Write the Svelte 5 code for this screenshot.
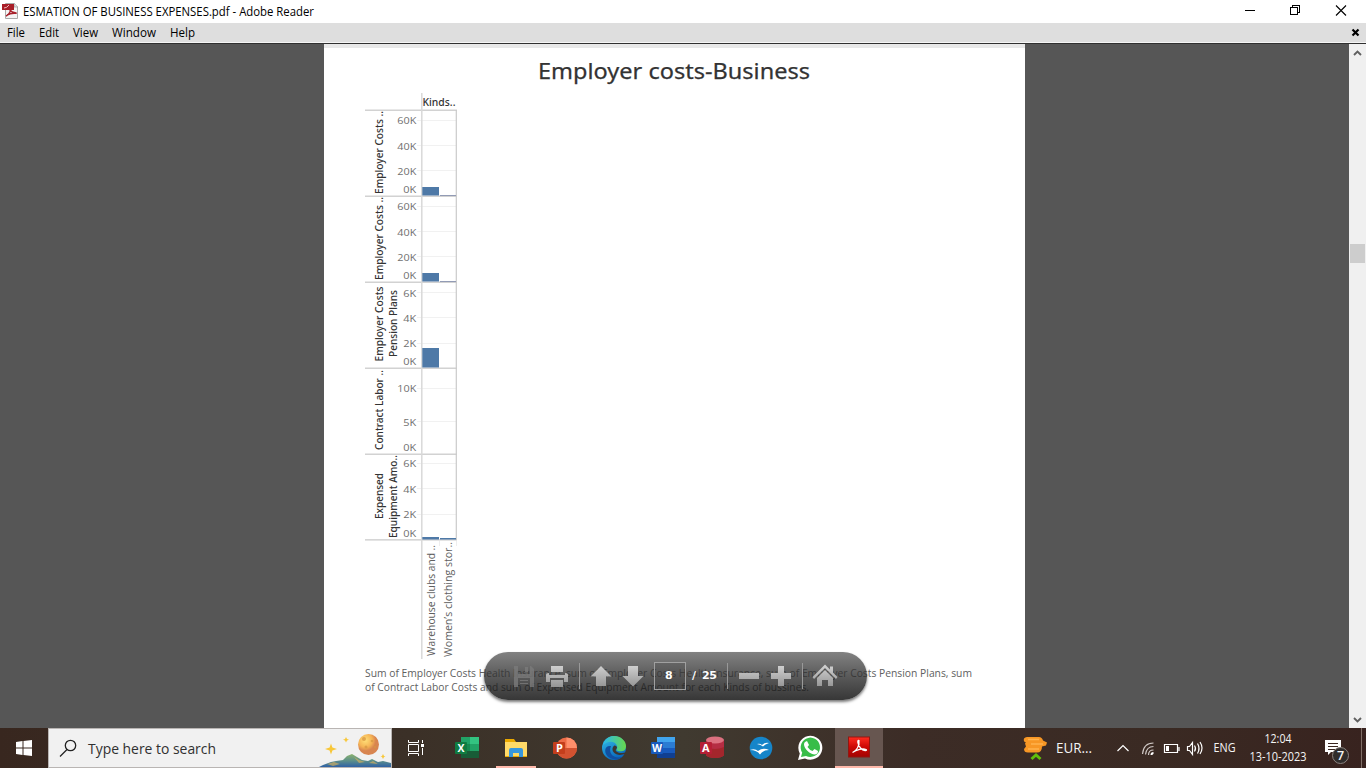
<script>
  const panels = [
    { top: 110, lines: ['Employer Costs ..'], spans: [[111, 194]], ticks: [['60K', 120], ['40K', 145.5], ['20K', 170.5], ['0K', 189]], bars: [[187, 8.5], [195, 1]] },
    { top: 196, lines: ['Employer Costs ..'], spans: [[197, 280]], ticks: [['60K', 206], ['40K', 231.5], ['20K', 256.5], ['0K', 275]], bars: [[273, 8.5], [281, 1]] },
    { top: 282, lines: ['Employer Costs', 'Pension Plans'], spans: [[286.5, 361.5], [290, 357]], ticks: [['6K', 292.5], ['4K', 317.5], ['2K', 343], ['0K', 361]], bars: [[348, 19.5]] },
    { top: 368, lines: ['Contract Labor ..'], spans: [[370, 450]], ticks: [['10K', 388], ['5K', 421.5], ['0K', 447]], bars: [] },
    { top: 454, lines: ['Expensed', 'Equipment Amo..'], spans: [[473, 519], [455, 538]], ticks: [['6K', 463], ['4K', 488.5], ['2K', 514], ['0K', 533]], bars: [[537, 2.5], [538, 1.5]] }
  ];
  const menus = [['File', 7, 18], ['Edit', 39, 20], ['View', 73, 25], ['Window', 112, 44], ['Help', 170, 25]];
</script>

<div class="screen">
  <header class="titlebar">
    <svg width="330" height="23" viewBox="0 0 330 23">
      <path d="M5.5 3.5h9l3 3v12h-12z" fill="#f4f4f4" stroke="#aaa" />
      <path d="M14 3v4h4" fill="#ddd" stroke="#999" stroke-width=".7" />
      <path d="M2 4h12v6H2z" fill="#a81e28" />
      <path d="M6 16c4-2 5-6 4-9-2 0-1 5 6 6 1 1-4-1-9 2" fill="none" stroke="#a8222c" stroke-width="1.5" />
      <path d="M4 8q3 0 5-3" fill="none" stroke="#edb8bc" />
      <text x="23" y="16" font-size="12" textLength="291" lengthAdjust="spacingAndGlyphs">ESMATION OF BUSINESS EXPENSES.pdf - Adobe Reader</text>
    </svg>
    <svg width="136" height="23" viewBox="1230 0 136 23" fill="none" stroke="#000" shape-rendering="crispEdges">
      <path d="M1245 10.5h10M1290.500 7.500h7v7h-7zM1292.500 7v-2h7v7h-2" />
      <path d="M1336 5.500l10 10M1346 5.500l-10 10" shape-rendering="auto" stroke-width="1.1" />
    </svg>
  </header>

  <nav class="menubar">
    <svg width="220" height="19" viewBox="0 23 220 19">
      {#each menus as [name, x, w]}
        <text {x} y="37" font-size="12" textLength={w} lengthAdjust="spacingAndGlyphs">{name}</text>
      {/each}
    </svg>
    <svg width="20" height="19" viewBox="1346 23 20 19"><path d="M1352.500 29.500l6 6M1358.500 29.500l-6 6" stroke="#000" stroke-width="2.200" /></svg>
  </nav>

  <main class="document">
    <section class="page">
      <svg width="701" height="684" viewBox="324 44 701 684">
        <rect x="324" y="44" width="701" height="4" fill="#e8e8e8" />
        <text x="538" y="79" class="heading" textLength="272" lengthAdjust="spacingAndGlyphs">Employer costs-Business</text>
        <text x="422.500" y="106" class="axis-name" textLength="33" lengthAdjust="spacingAndGlyphs">Kinds..</text>
        {#each panels as p}
          <path d="M365 {p.top + .3}H457" stroke="#d2d2d2" stroke-width="1.500" />
          {#each p.ticks as [label, y]}
            {#if label !== '0K'}<path d="M417 {Math.floor(y) + .5}H456" stroke="#f1f1f1" />{/if}
            <text x={label.length === 2 ? 403.3 : 397.3} y={y + 4} class="tick" textLength={label.length === 2 ? 13 : 19} lengthAdjust="spacingAndGlyphs">{label}</text>
          {/each}
          {#each p.lines as line, i}
            <text transform="translate({382.800 + i * 14} {p.spans[i][1]}) rotate(-90)" class="axis-name" textLength={p.spans[i][1] - p.spans[i][0]} lengthAdjust="spacingAndGlyphs">{line}</text>
          {/each}
        {/each}
        <path d="M365 539.800H457" stroke="#c9c9c9" stroke-width="1.300" />
        <path d="M421.800 93V659" stroke="#d9d9d9" stroke-width="1.500" />
        <path d="M456.300 110V540" stroke="#cacaca" stroke-width="1.200" />
        <path d="M439.500 541V546M456.500 541V546" stroke="#eee" />
        {#each panels as p}
          {#each p.bars as [y, h], i}
            <rect x={422.300 + i * 17.700} {y} width={i ? 16 : 16.700} height={h} fill={i && h === 1 ? '#929bb5' : '#4e79a7'} />
          {/each}
        {/each}
        <text transform="translate(435 656) rotate(-90)" class="category" textLength="111" lengthAdjust="spacingAndGlyphs">Warehouse clubs and ..</text>
        <text transform="translate(452 657) rotate(-90)" class="category" textLength="115" lengthAdjust="spacingAndGlyphs">Women’s clothing stor..</text>
        <text x="365" y="676.800" class="caption" textLength="607" lengthAdjust="spacingAndGlyphs">Sum of Employer Costs Health Insurance, sum of Employer Costs Health Insurance, sum of Employer Costs Pension Plans, sum</text>
        <text x="365" y="691.300" class="caption" textLength="444" lengthAdjust="spacingAndGlyphs">of Contract Labor Costs and sum of Expensed Equipment Amount for each Kinds of bussines.</text>
      </svg>
      <div class="reader-tools">
        <svg width="383" height="48" viewBox="484 652 383 48">
          <defs>
            <linearGradient id="metal" x1="0" y1="664" x2="0" y2="688" gradientUnits="userSpaceOnUse"><stop stop-color="#d4d4d4" /><stop offset="1" stop-color="#929292" /></linearGradient>
          </defs>
          <g fill="#7b7b7b" opacity=".8"><path d="M514 666h17l3 3v18h-20zm4 0v8h12v-8zm0 12v9h12v-9z" fill-rule="evenodd" /><path d="M525 667h3v5h-3zM520 680h8v1h-8zM520 683h8v1h-8z" /></g>
          <g fill="url(#metal)">
            <path d="M551 666h12v6h-12zM546 675q0-2 3-2v2h16v-2q3 0 3 2v7h-4v-4h-14v4h-4zM551 680h12v7h-12z" />
            <path d="M601 666l10.500 10.500h-5.500v9.500h-10v-9.500h-5.500zM628 666h10v10h5.500L633 686.500 622.500 676h5.500z" />
            <path d="M739 673h20v6h-20zM778 666h6v7h7v6h-7v7h-6v-7h-7v-6h7z" />
            <path d="M812.500 677L825 664.500l5 5v-3h3v6l4.500 4.500-1.500 2-11-11-11 11zM817 678l8-8 8 8v8h-5v-6h-6v6h-5z" />
          </g>
          <path d="M579.500 663v26M727.500 663v26M802.500 663v26" stroke="#999" />
          <rect x="654.500" y="662.500" width="31" height="27" fill="#444" fill-opacity=".25" stroke="#a0a0a0" />
          <g class="page-number"><text x="665" y="679">8</text><text x="692" y="679">/</text><text x="702" y="679" textLength="15">25</text></g>
        </svg>
      </div>
    </section>
    <aside class="scroll">
      <svg width="17" height="684" viewBox="1349 44 17 684">
        <rect x="1350" y="244" width="15" height="19" fill="#cdcdcd" />
        <path d="M1354 55l3.500-3.500 3.500 3.500M1354 718l3.500 3.500 3.500-3.500" fill="none" stroke="#606060" stroke-width="1.900" />
      </svg>
    </aside>
  </main>

  <footer class="taskbar">
    <div class="start"><svg width="48" height="40" viewBox="0 728 48 40"><path d="M16 742l6.500-1v6.500H16zM23.500 741l8.500-1v7.500h-8.500zM16 748.500h6.500v6.500l-6.500-1zM23.500 748.500h8.500v7.500l-8.500-1z" fill="white" /></svg></div>
    <div class="search">
      <svg width="342" height="38" viewBox="49 729 342 38">
        <defs>
          <radialGradient id="moon" cx=".35" cy=".3"><stop stop-color="#ffdf78" /><stop offset=".65" stop-color="#f5b456" /><stop offset="1" stop-color="#d88550" /></radialGradient>
          <linearGradient id="hill" x2="0" y2="1"><stop stop-color="#8bb36e" /><stop offset=".45" stop-color="#5f9288" /><stop offset="1" stop-color="#285aa9" /></linearGradient>
        </defs>
        <g fill="none" stroke="#222" stroke-width="1.300"><circle cx="70.500" cy="745.500" r="5.200" /><path d="M67 749.500l-7 7" /></g>
        <text x="88" y="754" font-size="15" fill="#303030" textLength="128" lengthAdjust="spacingAndGlyphs">Type here to search</text>
        <circle cx="368.500" cy="744.500" r="10.500" fill="url(#moon)" />
        <g fill="#d79743" opacity=".75"><circle cx="364" cy="739" r="2" /><circle cx="372" cy="741" r="1.300" /><circle cx="366" cy="747" r="1.500" /><circle cx="375" cy="747" r="1.200" /></g>
        <path d="M317 768l6-3 8-3 5-1 7-1 4-4 5-2 5 3 5 3 6 1 4-2 6 3 5-1 8 2v5z" fill="url(#hill)" />
        <path d="M327 764l7-2 6 2-7 2zM354 757l5 3 6 2-6 1zM369 763l4-2 5 3z" fill="#d7b25d" opacity=".65" />
        <path d="M331 743.500l1.400 4 4.600 1.500-4.600 1.500-1.400 4-1.400-4-4.600-1.500 4.600-1.500zM346 737l1 2 2 .7-2 .7-1 2-1-2-2-.7 2-.7zM383 754l1 2 1.500.500-1.500.500-1 2-1-2-1.500-.500 1.500-.500z" fill="#f8c739" />
      </svg>
    </div>
    <div class="apps">
      <svg width="491" height="40" viewBox="392 728 491 40">
        <defs>
          <linearGradient id="edge-blue" x2=".5" y2="1"><stop stop-color="#36c2e9" /><stop offset="1" stop-color="#0867bd" /></linearGradient>
          <linearGradient id="edge-green"><stop stop-color="#29b9ed" /><stop offset="1" stop-color="#67d84c" /></linearGradient>
          <linearGradient id="reader" x2="0" y2="1"><stop stop-color="#ff2c20" /><stop offset=".5" stop-color="#cc0804" /><stop offset="1" stop-color="#a20302" /></linearGradient>
        </defs>
        <rect x="835" y="728" width="48" height="40" fill="#675650" />
        <path d="M496 766h40v2h-40zM835 766h48v2h-48z" fill="#ffb9ab" />
        <g fill="none" stroke="#fff"><path d="M408.500 740v2.500h10V740M408.500 744.500h10v7h-10zM408.500 756v-2.500h10v2.500M422.500 740v3M422.500 748v7" /><path d="M421 744h3v3h-3z" fill="#fff" stroke="none" /></g>

        <g><path d="M461 737h18v21h-18z" fill="#168b50" /><path d="M461 737h9v7h-9z" fill="#21a366" /><path d="M470 737h9v7h-9z" fill="#33c481" /><path d="M470 744h9v7h-9z" fill="#21a366" /><path d="M461 751h18v7h-18z" fill="#185c37" /><rect x="455" y="742" width="12" height="12" rx="1" fill="#107c41" /><text x="457.500" y="752" class="letter" textLength="7" lengthAdjust="spacingAndGlyphs">X</text></g>
        <g><path d="M505 739h9l2 3h11v15h-22z" fill="#eba900" /><path d="M505 742h22v14h-22z" fill="#ffda68" /><path d="M509 757v-7q0-2 2-2h10q2 0 2 2v7h-4v-4h-6v4z" fill="#3797dd" /></g>
        <g><circle cx="566.500" cy="748" r="10.500" fill="#ed6c47" /><path d="M566.500 737.500a10.500 10.500 0 0 1 10.500 10.500h-10.500z" fill="#ff8f6b" /><path d="M556 748h21a10.500 10.500 0 0 1-21 0" fill="#d35230" /><rect x="553" y="742" width="12" height="12" rx="1" fill="#c43e1c" /><text x="556" y="752" class="letter">P</text></g>
        <g><circle cx="614" cy="748" r="12" fill="url(#edge-blue)" /><path d="M603 745C605 738 610 736 614 736c7 0 12 5 12 10 0 5-4 6-8 5-3-1 0-2-1-5-2-6-10-5-14-1" fill="url(#edge-green)" /><path d="M611 746c-3 7 2 13 11 11-3 3-8 3-12 1-7-4-6-13 1-12" fill="#114fa0" /><path d="M613 747c-2 4 2 8 7 8l5-1 1-2c-3 2-9 1-10-1-1-1 1-2 1-4-2-2-3-2-4 0" fill="#3c3730" /></g>
        <g><path d="M657 737h18v5h-18z" fill="#41a5ee" /><path d="M657 742h18v6h-18z" fill="#2b7cd3" /><path d="M657 748h18v5h-18z" fill="#185abd" /><path d="M657 753h18v5h-18z" fill="#103f91" /><rect x="651" y="742" width="12" height="12" rx="1" fill="#185abd" /><text x="652" y="752" class="letter" textLength="10" lengthAdjust="spacingAndGlyphs">W</text></g>
        <g><path d="M706 740v15c2 4 16 4 18 0v-15z" fill="#b52d43" /><path d="M706 747q9 4 18 0v8c-2 4-16 4-18 0z" fill="#a4262c" /><ellipse cx="715" cy="740" rx="9" ry="3.500" fill="#dc7180" /><rect x="700" y="742" width="12" height="12" rx="1" fill="#b51f35" /><text x="702" y="752" class="letter">A</text></g>
        <g><circle cx="761" cy="748" r="11.300" fill="#1685c9" /><path d="M750 750q5-2 8 1 5-4 11-1-6 0-9 4.500-3-4.500-10-4.500M757 744q3-1 5 1 3-3 7-2-4 1-6 3.500-2-2-6-2.500" fill="white" /></g>
        <g><path d="M798 760l1.800-6.500A12 12 0 1 1 805 758.500z" fill="#fff" /><path d="M801 757l1.200-4.400A9.700 9.700 0 1 1 806 756z" fill="#38bd49" /><path d="M805 742l2-1 2 4-1.500 2q2 3 5 4l2-2 3.500 2q0 3-3 3.500c-5 0-11-6-11-10 0-1 .5-2 1-2.500" fill="white" /></g>
        <g><rect x="848.500" y="737" width="21" height="20" fill="url(#reader)" stroke="#921711" /><path d="M852.500 752.500c3.500-1.500 7.500-6.500 6.500-12-2-1-1.500 4 1.500 7.500s7.500 3 5.500 1.500c-3-1.500-9.500 0-13.500 3" fill="none" stroke="#fff" stroke-width="1.200" /></g>
      </svg>
    </div>
    <div class="tray">
      <svg width="356" height="40" viewBox="1010 728 356 40">
        <g><path d="M1027 737h12q3 0 4 3.500l4 2-1 3-4 1q0 6-5 6h-9q-4 0-4-3.500l2-2.500-1-3 1-1q-3-1-2-4 1-1.500 3-1.500" fill="#f79725" /><path d="M1028 739.500h11M1031 744h12M1028 749h11" stroke="#ffb24c" stroke-width="1.500" /><path d="M1031.500 759l4.500-4 4.500 4" fill="none" stroke="#61bf0b" stroke-width="3" /></g>
        <text x="1056" y="753" font-size="14" textLength="36" lengthAdjust="spacingAndGlyphs">EUR...</text>
        <g fill="none" stroke="#fff" stroke-width="1.200"><path d="M1117.500 751l5.500-5.500 5.500 5.500" /><path d="M1142.500 754q1-11 11-11M1145.500 754.500q1-8 8-8M1148.500 755q0-5 5-5" stroke="#d0c9c6" /><path d="M1151.500 755q0-2 2-2" stroke-width="2" /><path d="M1164.500 744.500h13v8h-13zM1179 747v4" /><path d="M1166 746h3v5h-3z" fill="#fff" stroke="none" /><path d="M1187.500 746.500h2l3-4v12l-3-4h-2zM1194.500 745.500q2 3 0 6M1197.500 743.500q3 5 0 10M1200 742q4 6 0 12" /></g>
        <text x="1213.500" y="752" font-size="12" textLength="22" lengthAdjust="spacingAndGlyphs">ENG</text>
        <text x="1264.500" y="743" font-size="12" textLength="27" lengthAdjust="spacingAndGlyphs">12:04</text>
        <text x="1249.500" y="761" font-size="12" textLength="57" lengthAdjust="spacingAndGlyphs">13-10-2023</text>
        <path d="M1325 740h16v12h-10l-3 3v-3h-3z" fill="#fff" /><path d="M1328 743.500h10M1328 746.500h10M1328 749.500h7" stroke="#3a2721" />
        <circle cx="1340.500" cy="755.500" r="8" fill="#302d2c" stroke="#8c8480" /><text x="1337" y="760" font-size="12.500" font-weight="600">7</text>
        <path d="M1361.500 728v40" stroke="#806f67" />
      </svg>
    </div>
  </footer>
</div>

<style>
  :global(body) { margin: 0; overflow: hidden; }
  .screen { width: 1366px; height: 768px; display: flex; flex-direction: column; font-family: "Open Sans", "Noto Sans", sans-serif; background: #565656; }
  svg { display: block; flex: none; }
  .titlebar, .menubar { display: flex; justify-content: space-between; }
  .titlebar { height: 23px; background: white; }
  .menubar { height: 19px; background: #dedede; border-bottom: 1px solid #f5f5f5; }
  .document { height: 684px; border-top: 1px solid #303030; display: flex; justify-content: flex-end; background: #565656; }
  .page { position: relative; width: 701px; background: white; margin-right: 324px; }
  .scroll { width: 17px; background: #f0f0f0; }
  .heading { font-family: "Noto Sans", sans-serif; font-size: 22.5px; fill: #333; stroke: #333; stroke-width: .25px; }
  .axis-name { font-family: "Noto Sans", sans-serif; font-size: 9.8px; font-weight: 500; fill: #333; }
  .tick { font-size: 9.8px; fill: #6f6f6f; }
  .category { font-size: 10.2px; fill: #606060; }
  .caption { font-size: 10.2px; fill: #606060; }
  .reader-tools { position: absolute; left: 160px; top: 608px; border-radius: 24px; background: linear-gradient(rgba(88, 88, 88, .75), rgba(44, 44, 44, .78) 50%, rgba(11, 11, 11, .82)); box-shadow: 0 2px 3px #777; }
  .page-number { font-family: "DejaVu Sans", sans-serif; font-size: 11px; font-weight: bold; fill: #fff; }
  .taskbar { height: 40px; display: flex; background: linear-gradient(90deg, #38271f, #3b3027 30%, #403a30 50%, #3c2c26 67%, #3a2a23 85%, #38231f); }
  .start { width: 48px; }
  .search { width: 342px; height: 38px; background: #f1f1f1; border: 1px solid #b9b5b3; }
  .apps { width: 491px; }
  .tray { margin-left: auto; fill: #f5f5f5; }
  .letter { font-size: 11px; font-weight: 700; fill: white; }
</style>
